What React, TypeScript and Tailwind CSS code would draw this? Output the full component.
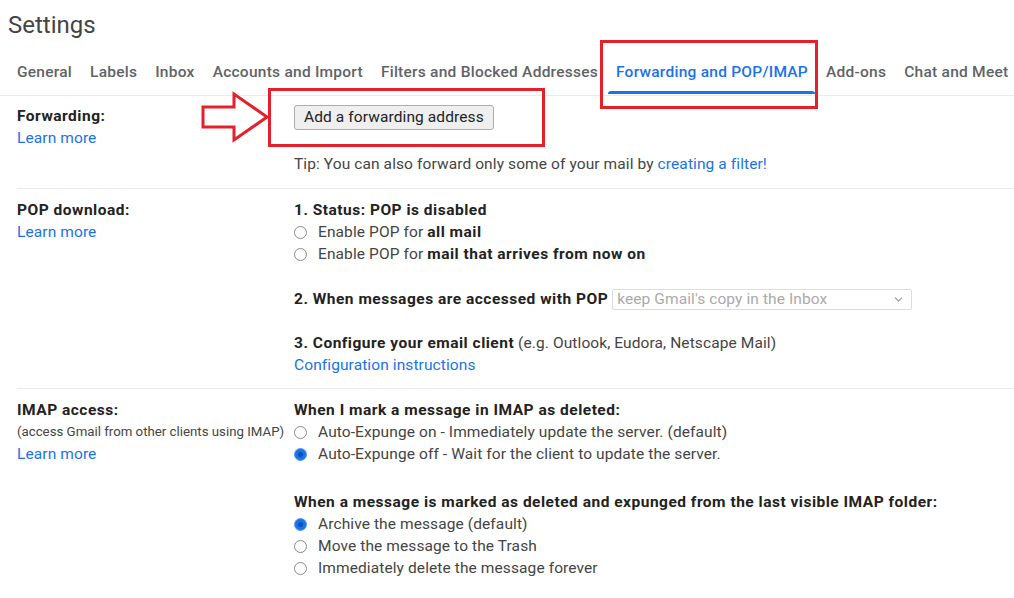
import { ChevronDown } from "lucide-react";

const tabs = [
  "General",
  "Labels",
  "Inbox",
  "Accounts and Import",
  "Filters and Blocked Addresses",
  "Forwarding and POP/IMAP",
  "Add-ons",
  "Chat and Meet",
];

function Radio({ checked, children }: { checked?: boolean; children: React.ReactNode }) {
  return (
    <div className="flex items-center h-[22px]">
      {checked ? (
        <span className="w-[13px] h-[13px] rounded-full bg-[#1a73e8] border border-[#5a9af0] flex items-center justify-center shrink-0">
          <span className="w-[5px] h-[5px] rounded-full bg-[#0a4fc0]" />
        </span>
      ) : (
        <span className="w-[13px] h-[13px] rounded-full border border-[#888] bg-white shrink-0" />
      )}
      <span className="ml-[11px] whitespace-nowrap">{children}</span>
    </div>
  );
}

function Link({ children }: { children: React.ReactNode }) {
  return <span className="text-[#1a73e8]">{children}</span>;
}

function B({ children }: { children: React.ReactNode }) {
  return <b className="font-bold text-[#222] tracking-[0.5px]">{children}</b>;
}

export default function App() {
  return (
    <div className="relative w-[1014px] h-[598px] bg-white overflow-hidden font-['Roboto',sans-serif] text-[15.5px] tracking-[0.1px] leading-[22px] text-[#444]">
      <h1 className="pl-[8px] pt-[8px] text-[24px] leading-[34px] tracking-normal text-[#444]">Settings</h1>

      <div className="mt-[8px] flex border-b border-[#ebebeb] pl-[8px] h-[46px]">
        {tabs.map((tab) => (
          <div
            key={tab}
            className={
              "relative px-[9px] pt-[11px] whitespace-nowrap font-medium tracking-[0.25px] " +
              (tab === "Forwarding and POP/IMAP" ? "text-[#1a73e8]" : "text-[#5f6368]")
            }
          >
            {tab}
            {tab === "Forwarding and POP/IMAP" && (
              <div className="absolute left-[1px] right-[2px] bottom-[1px] h-[3px] bg-[#1a73e8] rounded-t" />
            )}
          </div>
        ))}
      </div>

      {/* Forwarding */}
      <div className="ml-[17px] flex border-b border-[#ebebeb] pt-[9px] pb-[13px]">
        <div className="w-[277px] shrink-0">
          <div>
            <B>Forwarding:</B>
          </div>
          <Link>Learn more</Link>
        </div>
        <div>
          <button className="h-[25px] px-[9px] border border-[#adadad] rounded-[3px] bg-[#efefef] text-[#222] leading-[23px]">
            Add a forwarding address
          </button>
          <div className="mt-[23px]">
            Tip: You can also forward only some of your mail by <Link>creating a filter!</Link>
          </div>
        </div>
      </div>

      {/* POP */}
      <div className="ml-[17px] flex border-b border-[#ebebeb] pt-[10px] pb-[12px]">
        <div className="w-[277px] shrink-0">
          <div>
            <B>POP download:</B>
          </div>
          <Link>Learn more</Link>
        </div>
        <div>
          <div>
            <B>1. Status: POP is disabled</B>
          </div>
          <Radio>
            Enable POP for <B>all mail</B>
          </Radio>
          <Radio>
            Enable POP for <B>mail that arrives from now on</B>
          </Radio>
          <div className="mt-[23px] flex items-center h-[22px]">
            <B>2. When messages are accessed with POP</B>
            <div className="ml-[4px] w-[300px] h-[21px] border border-[#dcdcdc] rounded-[2px] flex items-center justify-between pl-[4px] pr-[6px] text-[#aaa]">
              <span>keep Gmail's copy in the Inbox</span>
              <ChevronDown className="w-[13px] h-[13px] text-[#999]" strokeWidth={2} />
            </div>
          </div>
          <div className="mt-[22px]">
            <B>3. Configure your email client</B> (e.g. Outlook, Eudora, Netscape Mail)
          </div>
          <Link>Configuration instructions</Link>
        </div>
      </div>

      {/* IMAP */}
      <div className="ml-[17px] flex pt-[10px]">
        <div className="w-[277px] shrink-0">
          <div>
            <B>IMAP access:</B>
          </div>
          <div className="text-[13.25px] tracking-normal whitespace-nowrap">(access Gmail from other clients using IMAP)</div>
          <Link>Learn more</Link>
        </div>
        <div>
          <div>
            <B>When I mark a message in IMAP as deleted:</B>
          </div>
          <Radio>Auto-Expunge on - Immediately update the server. (default)</Radio>
          <Radio checked>Auto-Expunge off - Wait for the client to update the server.</Radio>
          <div className="mt-[26px] whitespace-nowrap">
            <B>When a message is marked as deleted and expunged from the last visible IMAP folder:</B>
          </div>
          <Radio checked>Archive the message (default)</Radio>
          <Radio>Move the message to the Trash</Radio>
          <Radio>Immediately delete the message forever</Radio>
        </div>
      </div>

      {/* annotations */}
      <div className="absolute left-[600px] top-[40px] w-[218px] h-[69px] border-[3px] border-[#e5202a]" />
      <div className="absolute left-[268px] top-[88px] w-[277px] h-[59px] border-[3px] border-[#e5202a]" />
      <svg className="absolute left-[198px] top-[90px]" width="74" height="54" viewBox="0 0 74 54">
        <polygon
          points="5,17 36,17 36,4 69,27 36,50 36,37 5,37"
          fill="white"
          stroke="#e5202a"
          strokeWidth="3"
          strokeLinejoin="miter"
        />
      </svg>
    </div>
  );
}
